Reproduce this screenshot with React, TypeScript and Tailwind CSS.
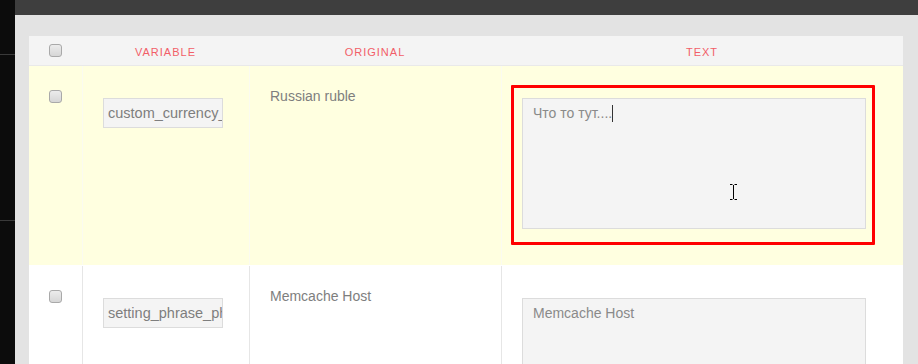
const rows = [
  {
    variable: 'custom_currency_rub',
    original: 'Russian ruble',
    text: '',
    placeholder: 'Что то тут....',
    active: true,
  },
  {
    variable: 'setting_phrase_ph_memcache_host',
    original: 'Memcache Host',
    text: 'Memcache Host',
    placeholder: '',
    active: false,
  },
]

function Checkbox() {
  return (
    <span className="block w-[13px] h-[13px] rounded-[3px] border border-[#a9a9a9] bg-gradient-to-b from-[#ececec] to-[#d6d6d6]" />
  )
}

function IBeam() {
  return (
    <svg width="9" height="16" viewBox="0 0 9 16" className="absolute left-[206px] top-[85px]">
      <path d="M1 0.5H3.5M5.5 0.5H8M4.5 1V15M1 15.5H3.5M5.5 15.5H8" stroke="#000" strokeWidth="1" fill="none" />
    </svg>
  )
}

export default function App() {
  return (
    <div
      className="w-[918px] h-[364px] overflow-hidden flex bg-[#e3e3e3]"
      style={{ fontFamily: '"Liberation Sans", Arial, sans-serif' }}
    >
      {/* sidebar */}
      <div className="w-[15px] shrink-0 bg-[#0c0c0c] flex flex-col">
        <div className="h-[55px] border-b border-[#3a3a3a]" />
        <div className="h-[166px] border-b border-[#3a3a3a]" />
      </div>

      <div className="flex-1 flex flex-col min-w-0">
        <div className="h-[15px] bg-[#3e3e3e] shrink-0" />

        <div className="flex-1 pl-[14px] pr-[15px] pt-[21px]">
          <div className="w-[874px]">
            {/* header */}
            <div className="grid grid-cols-[53px_167px_252px_402px] h-[30px] bg-[#f4f4f4] border-b border-[#e9e9e9]">
              <div className="flex items-center justify-center">
                <Checkbox />
              </div>
              {['VARIABLE', 'ORIGINAL', 'TEXT'].map((h) => (
                <div
                  key={h}
                  className="flex items-center justify-center pt-[4px] text-[11px] tracking-[1px] text-[#f25e68]"
                >
                  {h}
                </div>
              ))}
            </div>

            {rows.map((r) => (
              <div
                key={r.variable}
                className={
                  r.active
                    ? 'grid grid-cols-[53px_167px_252px_402px] h-[199px] bg-[#ffffe0]'
                    : 'grid grid-cols-[53px_167px_252px_402px] h-[199px] bg-white border-t border-[#ffffff]'
                }
              >
                <div className="flex justify-center pt-[24px]">
                  <Checkbox />
                </div>
                <div
                  className={
                    r.active
                      ? 'pl-[20px] pt-[32px] border-l border-[#fbfbf0]'
                      : 'pl-[20px] pt-[32px] border-l border-[#e6e6e6]'
                  }
                >
                  <div className="w-[120px] h-[30px] border border-[#dcdcdc] bg-[#f4f4f4] pl-[4px] text-[14.5px] leading-[28px] text-[#7e7e7e] overflow-hidden whitespace-nowrap">
                    {r.variable}
                  </div>
                </div>
                <div
                  className={
                    r.active
                      ? 'pl-[20px] pt-[20px] text-[14px] leading-[20px] text-[#7e7e7e] border-l border-[#fbfbf0]'
                      : 'pl-[20px] pt-[20px] text-[14px] leading-[20px] text-[#7e7e7e] border-l border-[#e6e6e6]'
                  }
                >
                  {r.original}
                </div>
                <div
                  className={
                    r.active
                      ? 'relative pl-[20px] pt-[32px] border-l border-[#fbfbf0]'
                      : 'relative pl-[20px] pt-[32px] border-l border-[#e6e6e6]'
                  }
                >
                  <div className="relative w-[344px] h-[131px] border border-[#dcdcdc] bg-[#f4f4f4] pl-[10px] pt-[4px] text-[14px] leading-[20px] text-[#8a8a8a]">
                    {r.text || (
                      <span>
                        {r.placeholder}
                        <span className="inline-block w-px h-[17px] bg-[#333] align-[-4px]" />
                      </span>
                    )}
                    {r.active && <IBeam />}
                  </div>
                  {r.active && (
                    <div className="absolute left-[9px] top-[19px] w-[364px] h-[160px] border-[3px] border-[#ff0000] rounded-[1px]" />
                  )}
                </div>
              </div>
            ))}
          </div>
        </div>
      </div>
    </div>
  )
}
